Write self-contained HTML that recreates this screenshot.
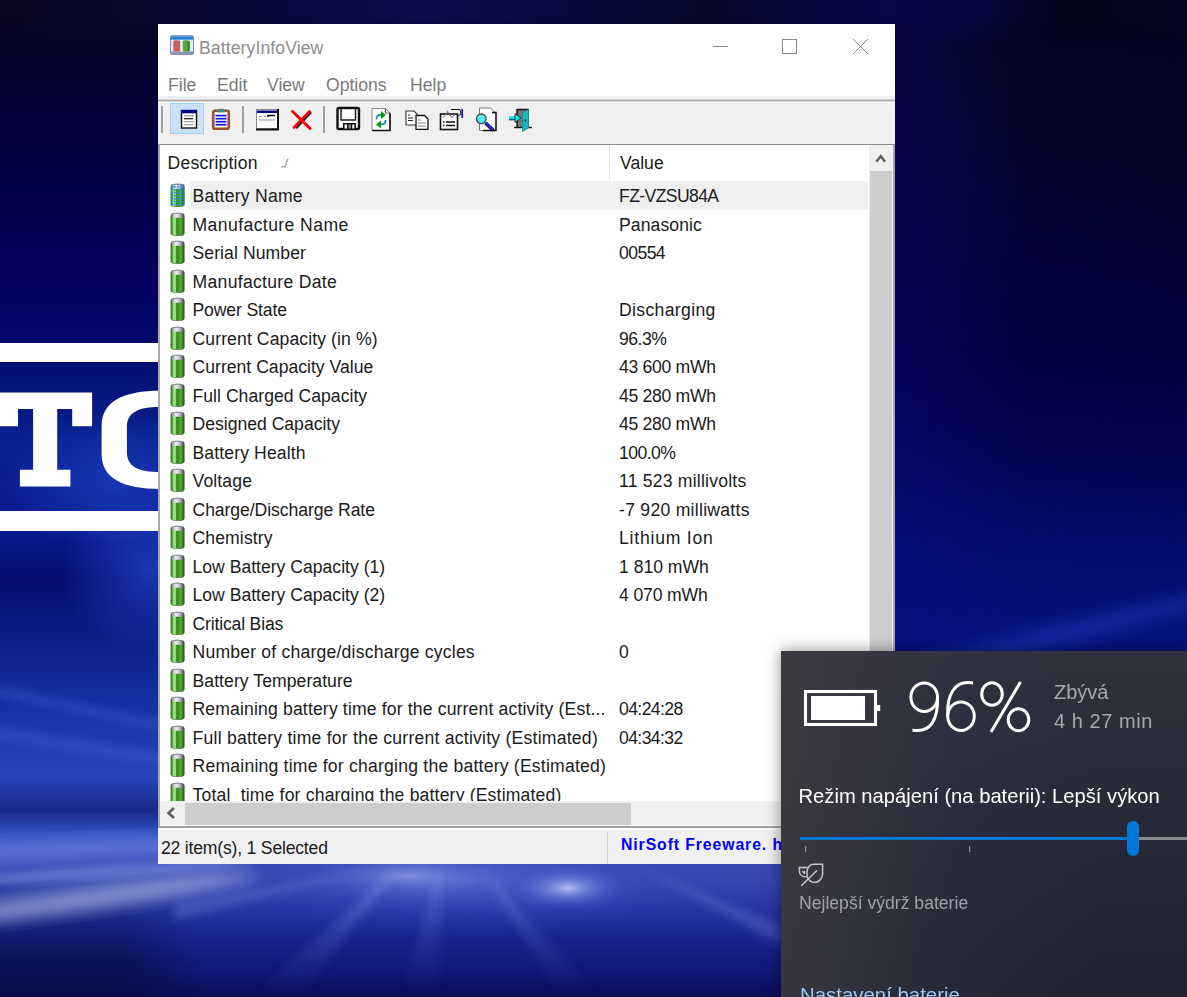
<!DOCTYPE html>
<html><head><meta charset="utf-8">
<style>
*{margin:0;padding:0;box-sizing:border-box}
html,body{width:1187px;height:997px;overflow:hidden}
body{position:relative;font-family:"Liberation Sans",sans-serif;background:#06082a}
.abs{position:absolute}
#bg{position:absolute;left:0;top:0;width:1187px;height:997px}
#win{position:absolute;left:158px;top:24px;width:737px;height:840px;background:#fff;overflow:hidden}
.title{position:absolute;left:41px;top:14px;font-size:17.6px;letter-spacing:0.1px;color:#8e8e8e;white-space:nowrap}
.menu{position:absolute;top:51px;font-size:17.6px;color:#7a7a7a;white-space:nowrap}
#tb{position:absolute;left:0;top:77px;width:737px;height:43px;background:#f0f0f0}
.sep{position:absolute;top:5px;width:2px;height:27px;background:#a0a0a0}
#list{position:absolute;left:0;top:120px;width:737px;height:682px;background:#fff;border-top:1px solid #8c8c8c;border-left:2px solid #a8a8a8;border-right:2px solid #a8a8a8}
.hdr{position:absolute;top:8px;font-size:17.6px;line-height:20px;color:#1b1b1b;white-space:nowrap}
.hsep{position:absolute;top:0;width:1px;height:35px;background:#e5e5e5}
#rows{position:absolute;left:0;top:0;width:709px;height:656px;overflow:hidden}
.row{position:absolute;left:0;width:709px;height:28.5px}
.row.sel::before{content:"";position:absolute;left:29.5px;top:0;width:678px;height:28.5px;background:#efefef}
.row .d{position:absolute;left:32.5px;top:5px;font-size:17.6px;line-height:20px;color:#1b1b1b;white-space:nowrap}
.row .v{position:absolute;left:459px;top:5px;font-size:17.6px;line-height:20px;color:#1b1b1b;white-space:nowrap}
.row svg{position:absolute;left:10px;top:1px}
#vsb{position:absolute;left:709px;top:0;width:24px;height:656px;background:#f0f0f0}
#vthumb{position:absolute;left:1px;top:25.5px;width:22px;height:530px;background:#cdcdcd}
#hsb{position:absolute;left:0;top:656px;width:709px;height:24px;background:#f0f0f0}
#hthumb{position:absolute;left:25px;top:1.5px;width:446px;height:22px;background:#cdcdcd}
#corner{position:absolute;left:709px;top:656px;width:24px;height:24px;background:#f0f0f0}
#status{position:absolute;left:0;top:802px;width:737px;height:38px;background:#f0f0f0;border-top:2px solid #a0a0a0}
.ftxt{white-space:nowrap;line-height:24px}
#fly{position:absolute;left:781px;top:651px;width:406px;height:346px;background:linear-gradient(90deg,rgba(62,62,66,0.75) 0%,rgba(48,48,70,0.35) 45%,rgba(40,40,72,0) 80%),linear-gradient(180deg,#30313e 0%,#282a3a 45%,#1f2230 100%);box-shadow:0 0 14px rgba(0,0,0,.45)}
</style></head><body>
<svg width="0" height="0" style="position:absolute">
  <defs>
    <linearGradient id="bgr" x1="0" y1="0" x2="1" y2="0">
      <stop offset="0" stop-color="#3a6030"/>
      <stop offset="0.1" stop-color="#4aa036"/>
      <stop offset="0.18" stop-color="#8ee070"/>
      <stop offset="0.36" stop-color="#8ee070"/>
      <stop offset="0.42" stop-color="#3e8e26"/>
      <stop offset="0.6" stop-color="#3e8e26"/>
      <stop offset="0.66" stop-color="#56aa3a"/>
      <stop offset="0.8" stop-color="#4e9e32"/>
      <stop offset="0.9" stop-color="#2c6c1c"/>
      <stop offset="1" stop-color="#3a5a30"/>
    </linearGradient>
    <linearGradient id="bcap" x1="0" y1="0" x2="1" y2="0">
      <stop offset="0" stop-color="#9a9aa8"/>
      <stop offset="0.35" stop-color="#f0f0f4"/>
      <stop offset="0.65" stop-color="#c8c4d8"/>
      <stop offset="1" stop-color="#6a6088"/>
    </linearGradient>
    <pattern id="dots" x="0" y="0" width="3" height="3" patternUnits="userSpaceOnUse">
      <rect x="1" y="1" width="1.6" height="1.6" fill="#1a8cff"/>
    </pattern>
    <clipPath id="batclip"><path d="M0.2 4.5 Q0.2 1.8 3 1.8 H12.2 Q15 1.8 15 4.5 V22.5 Q15 25 7.6 25 Q0.2 25 0.2 22.5 Z"/></clipPath>
    <symbol id="bat" viewBox="0 0 16 25">
      <path d="M0.9 5 Q0.9 2.6 3 2.6 H12.2 Q14.3 2.6 14.3 5 V22.5 Q14.3 24.8 7.6 24.8 Q0.9 24.8 0.9 22.5 Z" fill="url(#bgr)"/>
      <path d="M0.9 5 Q0.9 2.6 3 2.6 H12.2 Q14.3 2.6 14.3 5 V22.5 Q14.3 24.8 7.6 24.8 Q0.9 24.8 0.9 22.5 Z" fill="none" stroke="#4a5a44" stroke-width="0.7" opacity="0.8"/>
      <path d="M2.2 6.8 V4.2 Q2.2 2.4 4.2 2.4 H11 Q13 2.4 13 4.2 V6.8 Z" fill="url(#bcap)"/>
      <path d="M3.5 2.6 Q7.6 1.3 11.7 2.6" fill="none" stroke="#8a84a0" stroke-width="0.9"/>
    </symbol>
    <symbol id="batsel" viewBox="0 0 16 25">
      <use href="#bat"/>
      <rect x="0" y="0" width="16" height="25" fill="url(#dots)" clip-path="url(#batclip)"/>
    </symbol>
  </defs>
</svg>
<svg id="bg" width="1187" height="997" viewBox="0 0 1187 997">
  <defs>
    <linearGradient id="gA" x1="0" y1="0" x2="1187" y2="0" gradientUnits="userSpaceOnUse">
      <stop offset="0" stop-color="#08051f"/>
      <stop offset="0.2" stop-color="#080838"/>
      <stop offset="0.36" stop-color="#0a0c4c"/>
      <stop offset="0.6" stop-color="#06062c"/>
      <stop offset="0.75" stop-color="#08084a"/>
      <stop offset="0.82" stop-color="#070640"/>
      <stop offset="0.9" stop-color="#030318"/>
      <stop offset="1" stop-color="#060624"/>
    </linearGradient>
    <linearGradient id="gB" x1="0" y1="0" x2="0" y2="997" gradientUnits="userSpaceOnUse">
      <stop offset="0" stop-color="#08051f"/>
      <stop offset="0.024" stop-color="#070528"/>
      <stop offset="0.11" stop-color="#040035"/>
      <stop offset="0.25" stop-color="#020058"/>
      <stop offset="0.34" stop-color="#04086a"/>
      <stop offset="0.44" stop-color="#08208e"/>
      <stop offset="0.53" stop-color="#0a1c90"/>
      <stop offset="0.58" stop-color="#060c70"/>
      <stop offset="0.7" stop-color="#1430a0"/>
      <stop offset="0.78" stop-color="#2844b8"/>
      <stop offset="0.813" stop-color="#18288a"/>
      <stop offset="0.835" stop-color="#3050c0"/>
      <stop offset="0.87" stop-color="#3a50b8"/>
      <stop offset="0.93" stop-color="#16207c"/>
      <stop offset="0.965" stop-color="#0a1258"/>
      <stop offset="1" stop-color="#080c4a"/>
    </linearGradient>
    <linearGradient id="gC" x1="0" y1="0" x2="0" y2="997" gradientUnits="userSpaceOnUse">
      <stop offset="0.024" stop-color="#05041e"/>
      <stop offset="0.15" stop-color="#050428"/>
      <stop offset="0.25" stop-color="#040232"/>
      <stop offset="0.35" stop-color="#02003c"/>
      <stop offset="0.45" stop-color="#030550"/>
      <stop offset="0.55" stop-color="#040c6a"/>
      <stop offset="0.66" stop-color="#081480"/>
      <stop offset="1" stop-color="#081480"/>
    </linearGradient>
    <linearGradient id="gCx" x1="895" y1="0" x2="1187" y2="0" gradientUnits="userSpaceOnUse">
      <stop offset="0" stop-color="#0a0c90" stop-opacity="0.35"/>
      <stop offset="0.45" stop-color="#0a0c90" stop-opacity="0.05"/>
      <stop offset="1" stop-color="#0a18b0" stop-opacity="0"/>
    </linearGradient>
    <linearGradient id="gD" x1="0" y1="863" x2="0" y2="997" gradientUnits="userSpaceOnUse">
      <stop offset="0" stop-color="#3a48b4"/>
      <stop offset="0.15" stop-color="#3644b0"/>
      <stop offset="0.35" stop-color="#2834a4"/>
      <stop offset="0.55" stop-color="#1a2490"/>
      <stop offset="0.8" stop-color="#111878"/>
      <stop offset="1" stop-color="#0a0e58"/>
    </linearGradient>
    <radialGradient id="glow" cx="0.5" cy="0.5" r="0.5">
      <stop offset="0" stop-color="#d0d8ff" stop-opacity="0.95"/>
      <stop offset="0.4" stop-color="#8898e8" stop-opacity="0.55"/>
      <stop offset="1" stop-color="#4050d0" stop-opacity="0"/>
    </radialGradient>
    <radialGradient id="glowb" cx="0.5" cy="0.5" r="0.5">
      <stop offset="0" stop-color="#6878e0" stop-opacity="0.8"/>
      <stop offset="1" stop-color="#3848c8" stop-opacity="0"/>
    </radialGradient>
    <radialGradient id="darkc" cx="0.5" cy="0.5" r="0.5"><stop offset="0" stop-color="#060a50"/><stop offset="1" stop-color="#060a50" stop-opacity="0"/></radialGradient>
    <radialGradient id="glowc" cx="0.5" cy="0.5" r="0.5">
      <stop offset="0" stop-color="#2a58e0" stop-opacity="0.8"/>
      <stop offset="1" stop-color="#2a58e0" stop-opacity="0"/>
    </radialGradient>
    <linearGradient id="rayf" x1="0" y1="866" x2="0" y2="997" gradientUnits="userSpaceOnUse">
      <stop offset="0" stop-color="#a0b0f8" stop-opacity="0.9"/>
      <stop offset="1" stop-color="#6070d8" stop-opacity="0"/>
    </linearGradient>
    <linearGradient id="mgC" x1="882" y1="0" x2="896" y2="0" gradientUnits="userSpaceOnUse"><stop offset="0" stop-color="#fff" stop-opacity="0"/><stop offset="1" stop-color="#fff"/></linearGradient>
    <linearGradient id="mgCx" x1="0" y1="0" x2="0" y2="200" gradientUnits="userSpaceOnUse"><stop offset="0" stop-color="#fff" stop-opacity="0.8"/><stop offset="1" stop-color="#fff"/></linearGradient>
    <mask id="mCx" maskUnits="userSpaceOnUse" x="0" y="0" width="1187" height="997"><rect x="895" y="0" width="292" height="997" fill="url(#mgCx)"/></mask>
    <mask id="mC" maskUnits="userSpaceOnUse" x="0" y="0" width="1187" height="997"><rect x="870" y="0" width="317" height="997" fill="url(#mgC)"/></mask>
    <linearGradient id="mgD" x1="120" y1="0" x2="200" y2="0" gradientUnits="userSpaceOnUse"><stop offset="0" stop-color="#fff" stop-opacity="0"/><stop offset="1" stop-color="#fff"/></linearGradient>
    <mask id="mD" maskUnits="userSpaceOnUse" x="0" y="0" width="1187" height="997"><rect x="120" y="860" width="680" height="137" fill="url(#mgD)"/></mask>
    <linearGradient id="mgA" x1="0" y1="18" x2="0" y2="50" gradientUnits="userSpaceOnUse"><stop offset="0" stop-color="#fff"/><stop offset="1" stop-color="#fff" stop-opacity="0"/></linearGradient>
    <mask id="mA" maskUnits="userSpaceOnUse" x="0" y="0" width="1187" height="997"><rect x="0" y="0" width="1187" height="50" fill="url(#mgA)"/></mask>
    <filter id="b2" x="-50%" y="-50%" width="200%" height="200%"><feGaussianBlur stdDeviation="2"/></filter>
    <filter id="b4" x="-50%" y="-50%" width="200%" height="200%"><feGaussianBlur stdDeviation="4"/></filter>
    <filter id="b12" x="-10%" y="-10%" width="120%" height="120%"><feGaussianBlur stdDeviation="12"/></filter>
    <filter id="b8" x="-50%" y="-50%" width="200%" height="200%"><feGaussianBlur stdDeviation="8"/></filter>
  </defs>
  <rect x="0" y="0" width="1187" height="997" fill="url(#gB)"/>
  <rect x="870" y="0" width="317" height="997" fill="url(#gC)" mask="url(#mC)"/>
  <rect x="895" y="0" width="292" height="997" fill="url(#gCx)" mask="url(#mCx)"/>
  <rect x="120" y="860" width="680" height="137" fill="url(#gD)" mask="url(#mD)"/>
  <rect x="0" y="0" width="1187" height="50" fill="url(#gA)" mask="url(#mA)"/>
  <!-- left column glows -->
  <ellipse cx="150" cy="570" rx="90" ry="80" fill="url(#glowc)" opacity="0.7"/>
  
  <ellipse cx="40" cy="700" rx="200" ry="5" transform="rotate(12 40 700)" fill="#6078e8" opacity="0.25" filter="url(#b4)"/>
  <ellipse cx="40" cy="740" rx="220" ry="6" transform="rotate(9 40 740)" fill="#6078e8" opacity="0.25" filter="url(#b4)"/>
  <ellipse cx="60" cy="849" rx="220" ry="9" transform="rotate(-2 60 849)" fill="#8090f0" opacity="0.6" filter="url(#b8)"/>
  <ellipse cx="90" cy="873" rx="160" ry="5" transform="rotate(-4 90 873)" fill="#98a4ec" opacity="0.55" filter="url(#b4)"/>
  <ellipse cx="80" cy="900" rx="180" ry="11" transform="rotate(-8 80 900)" fill="#b8c0ec" opacity="0.65" filter="url(#b8)"/>
  <!-- bottom glows -->
  <ellipse cx="470" cy="880" rx="260" ry="55" fill="url(#glowb)" opacity="0.65"/>
  <ellipse cx="568" cy="888" rx="62" ry="24" fill="url(#glow)" opacity="0.85"/>
  <ellipse cx="410" cy="876" rx="120" ry="30" fill="url(#glow)" opacity="0.45"/>
  <g filter="url(#b4)">
    <path d="M400 866 L250 997 L300 997 Z" fill="url(#rayf)" opacity="0.45"/>
    <path d="M480 866 L560 997 L600 997 Z" fill="url(#rayf)" opacity="0.35"/>
    <path d="M440 866 L400 997 L440 997 Z" fill="url(#rayf)" opacity="0.3"/>
    <path d="M640 868 L781 925 L781 945 Z" fill="#8090e0" opacity="0.3"/>
    <path d="M175 905 L380 868 L175 920 Z" fill="#8898e0" opacity="0.3"/>
  </g>
  <!-- right side ray near flyout -->
  <ellipse cx="1040" cy="640" rx="220" ry="10" transform="rotate(-14 1040 640)" fill="#2a40c8" opacity="0.45" filter="url(#b8)"/>
</svg>

<svg class="abs" style="left:0;top:330px" width="160" height="210" viewBox="0 330 160 210">
  <ellipse cx="115" cy="480" rx="110" ry="70" fill="url(#glowc)" opacity="0.55"/>
  <rect x="0" y="343" width="160" height="19" fill="#fff"/>
  <rect x="0" y="511" width="160" height="20" fill="#fff"/>
  <path d="M0 392.6 H92.1 V426.3 H72.2 V408.9 H57.2 V469.7 H70.4 V486.5 H19.9 V469.7 H33.1 V408.9 H18 V426.3 H0 Z" fill="#fff"/>
  <path d="M160 390.8 C124 390.8 101.6 401 101.6 426 V454 C101.6 479 124 488.9 160 488.9 V472 C139 472 126.9 467 126.9 452 V427 C126.9 412 139 407 160 407 Z" fill="#fff"/>
</svg>
<div id="win">
  <svg class="abs" style="left:0;top:0" width="737" height="77" viewBox="158 24 737 77">
    <rect x="170.5" y="35.8" width="23" height="18.7" rx="1.5" fill="#e8eef8" stroke="#7888a8" stroke-width="1"/>
    <rect x="171" y="36.3" width="22" height="3.4" fill="#2a82da"/>
    <rect x="171" y="51.5" width="22" height="2.8" fill="#8898b8"/>
    <path d="M173.2 41.5 Q173.2 40.3 176.7 40.3 Q180.2 40.3 180.2 41.5 V50.5 Q180.2 51.7 176.7 51.7 Q173.2 51.7 173.2 50.5 Z" fill="#c26464"/>
    <path d="M174.5 48.5 H179 V51 H174.5Z" fill="#e85050"/>
    <path d="M182.7 41.5 Q182.7 40.3 186.2 40.3 Q189.7 40.3 189.7 41.5 V50.5 Q189.7 51.7 186.2 51.7 Q182.7 51.7 182.7 50.5 Z" fill="#58a840"/>
    <path d="M187.5 41 V51 H189.7 V41Z" fill="#338a20"/>
    <path d="M713 46.5 H728" stroke="#8a8a8a" stroke-width="1"/>
    <rect x="782.5" y="39.5" width="14" height="14" fill="none" stroke="#8a8a8a" stroke-width="1"/>
    <path d="M853 39 L868 54 M868 39 L853 54" stroke="#8a8a8a" stroke-width="1"/>
    <rect x="158" y="96.1" width="737" height="3.5" fill="#f0f0f0"/><rect x="158" y="99.6" width="737" height="1.4" fill="#a8a8a8"/>
  </svg>
  <div class="title">BatteryInfoView</div>
  <div class="menu" style="left:10px">File</div>
  <div class="menu" style="left:59px">Edit</div>
  <div class="menu" style="left:109px">View</div>
  <div class="menu" style="left:168px">Options</div>
  <div class="menu" style="left:252px">Help</div>
  <div id="tb">
    <svg class="abs" style="left:0;top:0" width="737" height="43" viewBox="158 101 737 43">
      <rect x="158" y="101" width="737" height="0.6" fill="#a8a8a8"/><rect x="158" y="101.6" width="737" height="1.3" fill="#fbfbfb"/>
      <g fill="#a0a0a0"><rect x="161" y="106" width="2" height="27"/><rect x="242" y="106" width="2" height="27"/><rect x="323" y="106" width="2" height="27"/></g>
      <rect x="170.5" y="103.5" width="33" height="30" fill="#c9e0f5" stroke="#9ccff7" stroke-width="1"/>
      <!-- doc icon -->
      <rect x="181.5" y="110.5" width="15" height="17.5" fill="#fff" stroke="#111" stroke-width="1.4"/>
      <rect x="181" y="110" width="16" height="3.3" fill="#000080"/>
      <g stroke-width="1.2"><path d="M184 115.8 H194" stroke="#999"/><path d="M184 118.7 H193" stroke="#111"/><path d="M184 121.7 H194" stroke="#999"/><path d="M184 124.6 H193" stroke="#999"/></g>
      <!-- clipboard -->
      <rect x="213.2" y="110.8" width="15.6" height="18" rx="1.8" fill="#fff" stroke="#8a6a30" stroke-width="2.6"/>
      <rect x="213.2" y="110.8" width="15.6" height="18" rx="1.8" fill="none" stroke="#c02020" stroke-width="2.6" stroke-dasharray="1.3 1.3" opacity="0.6"/>
      <g stroke="#1010ff" stroke-width="1.7"><path d="M215.5 115.6 H226.5"/><path d="M215.5 118.7 H226.5"/><path d="M215.5 121.7 H226.5"/><path d="M215.5 124.7 H226.5"/></g>
      <path d="M217 112 L218.5 109.3 H223.5 L225 112 Z" fill="#20a0a0" stroke="#666" stroke-width="0.8"/>
      <!-- window icon -->
      <rect x="256.5" y="109.5" width="21" height="19" fill="#fff" stroke="#888" stroke-width="1"/>
      <path d="M278 109 V129.5 H256" fill="none" stroke="#111" stroke-width="2"/>
      <rect x="257" y="110.5" width="20" height="2.5" fill="#000080"/>
      <path d="M259 116.5 H262 M263.5 116.5 H266" stroke="#999" stroke-width="1"/>
      <path d="M268 117 V115.5 H275" stroke="#111" stroke-width="1.6" fill="none"/>
      <path d="M259 120 H275" stroke="#999" stroke-width="1"/>
      <!-- red X -->
      <path d="M293.5 112 L311 129" stroke="#111" stroke-width="1.6"/>
      <path d="M310 111.5 L295 127.5" stroke="#111" stroke-width="2.4" transform="translate(1,0.7)"/>
      <path d="M292.5 111.5 L310 128.5 M309.5 111.5 L294 127.5" stroke="#ff0000" stroke-width="2.8" stroke-linecap="round"/>
      <!-- floppy -->
      <rect x="337.5" y="108" width="21.5" height="21" rx="1.5" fill="#fff" stroke="#111" stroke-width="2.4"/>
      <rect x="341" y="108.5" width="14.5" height="11.5" fill="#fff" stroke="#111" stroke-width="1.4"/>
      <rect x="343" y="123" width="13" height="6" fill="#111"/>
      <rect x="344.5" y="124.5" width="2.5" height="4" fill="#fff"/><rect x="348.5" y="124.5" width="2.5" height="4" fill="#888"/><rect x="352.3" y="124.5" width="2" height="4" fill="#fff"/>
      <!-- refresh doc -->
      <path d="M372 108.5 H385.5 L390 113 V130.5 H372 Z" fill="#fff" stroke="#888" stroke-width="1"/>
      <path d="M390 113 V130.5 H372" fill="none" stroke="#111" stroke-width="1.6"/>
      <path d="M385.5 108.5 V113 H390" fill="none" stroke="#555" stroke-width="1"/>
      <path d="M376.5 119.5 Q376 115 380.5 115 H382" fill="none" stroke="#1890a8" stroke-width="1.8"/>
      <path d="M381 111 L386 115 L381 119 Z" fill="#00a000"/>
      <path d="M385.5 120 Q386 124.5 381.5 124.5 H380" fill="none" stroke="#1890a8" stroke-width="1.8"/>
      <path d="M381 120.5 L376 124.5 L381 128.5 Z" fill="#00a000"/>
      <!-- copy -->
      <path d="M406 111 H414 L417 114 V125 H406 Z" fill="#fff" stroke="#333" stroke-width="1.1"/>
      <path d="M408 115 H410 M408 118 H413 M408 120.5 H413" stroke="#222" stroke-width="1"/>
      <path d="M416 115.5 H424.5 L428 119 V129.3 H416 Z" fill="#fff" stroke="#111" stroke-width="1.3"/>
      <path d="M418 120 H421 M418 123 H426 M418 126 H426" stroke="#888" stroke-width="1"/>
      <!-- props -->
      <rect x="440.5" y="114" width="17" height="15.5" fill="#fff" stroke="#111" stroke-width="1.6"/>
      <path d="M443 122 H444.5 M446 122 H455 M443 125.5 H444.5 M446 125.5 H455" stroke="#111" stroke-width="1.3"/>
      <path d="M443 117.5 L447.5 112 L452 117.5 L455.5 113.5" fill="none" stroke="#666" stroke-width="1.4" stroke-dasharray="1 0.6"/>
      <path d="M451 109.5 H460 L461 114 L457 117" fill="none" stroke="#111" stroke-width="1"/>
      <rect x="461.3" y="109" width="1.8" height="9" fill="#1a1aa0"/>
      <!-- find -->
      <path d="M479.5 108 H490.5 L496 113 V130.5 H479.5 Z" fill="#fff" stroke="#777" stroke-width="1"/>
      <path d="M492 112.5 H496 V130.5 H483" fill="none" stroke="#111" stroke-width="1.4"/>
      <circle cx="481.3" cy="118.8" r="4.8" fill="#50f0f8" stroke="#444" stroke-width="1.3"/>
      <path d="M485.5 123 L493.5 130.5" stroke="#111" stroke-width="3.6"/>
      <path d="M485.5 122.5 L493 129.6" stroke="#2020ff" stroke-width="2.2"/>
      <!-- exit -->
      <path d="M517 127 V109.5 H528 V127" fill="#777" stroke="#111" stroke-width="1.4"/>
      <path d="M514 127.5 H532" stroke="#111" stroke-width="1.4"/>
      <path d="M522.5 112.5 L528.5 109.5 V128 L522.5 131.5 Z" fill="#18b8c0" stroke="#0a8a90" stroke-width="0.8"/>
      <path d="M509 118.5 H518" stroke="#111" stroke-width="3.6"/>
      <path d="M509 118 H517" stroke="#10f0ff" stroke-width="2.6"/>
      <path d="M515 113.5 L521 118 L515 122.5 Z" fill="#10f0ff" stroke="#111" stroke-width="0.8"/>
      <circle cx="525.5" cy="120.5" r="0.9" fill="#111"/>
    </svg>
  </div>
  <div id="list">
    <div class="hdr" style="left:7.5px;letter-spacing:0.2px">Description</div>
    <svg class="abs" style="left:120px;top:12px" width="11" height="12"><path d="M1.2 9.7 H4.9 L7.9 1.8" fill="none" stroke="#a8a8a8" stroke-width="1.6"/></svg>
    <div class="hsep" style="left:449px"></div>
    <div class="hdr" style="left:460px">Value</div>
    <div id="rows">
<div class="row sel" style="top:36.0px"><svg width="16" height="25"><use href="#batsel"/></svg><div class="d" style="letter-spacing:0.23px">Battery Name</div><div class="v" style="letter-spacing:-0.61px">FZ-VZSU84A</div></div>
<div class="row" style="top:64.5px"><svg width="16" height="25"><use href="#bat"/></svg><div class="d" style="letter-spacing:0.41px">Manufacture Name</div><div class="v" style="letter-spacing:0.08px">Panasonic</div></div>
<div class="row" style="top:93.0px"><svg width="16" height="25"><use href="#bat"/></svg><div class="d" style="letter-spacing:0.08px">Serial Number</div><div class="v" style="letter-spacing:-0.57px">00554</div></div>
<div class="row" style="top:121.5px"><svg width="16" height="25"><use href="#bat"/></svg><div class="d" style="letter-spacing:0.3px">Manufacture Date</div></div>
<div class="row" style="top:150.0px"><svg width="16" height="25"><use href="#bat"/></svg><div class="d" style="letter-spacing:-0.14px">Power State</div><div class="v" style="letter-spacing:0.34px">Discharging</div></div>
<div class="row" style="top:178.5px"><svg width="16" height="25"><use href="#bat"/></svg><div class="d" style="letter-spacing:0.1px">Current Capacity (in %)</div><div class="v" style="letter-spacing:-0.5px">96.3%</div></div>
<div class="row" style="top:207.0px"><svg width="16" height="25"><use href="#bat"/></svg><div class="d" style="letter-spacing:0.01px">Current Capacity Value</div><div class="v" style="letter-spacing:-0.3px">43 600 mWh</div></div>
<div class="row" style="top:235.5px"><svg width="16" height="25"><use href="#bat"/></svg><div class="d" style="letter-spacing:0.03px">Full Charged Capacity</div><div class="v" style="letter-spacing:-0.3px">45 280 mWh</div></div>
<div class="row" style="top:264.0px"><svg width="16" height="25"><use href="#bat"/></svg><div class="d" style="letter-spacing:-0.01px">Designed Capacity</div><div class="v" style="letter-spacing:-0.3px">45 280 mWh</div></div>
<div class="row" style="top:292.5px"><svg width="16" height="25"><use href="#bat"/></svg><div class="d" style="letter-spacing:0.12px">Battery Health</div><div class="v" style="letter-spacing:-0.56px">100.0%</div></div>
<div class="row" style="top:321.0px"><svg width="16" height="25"><use href="#bat"/></svg><div class="d" style="letter-spacing:0.12px">Voltage</div><div class="v" style="letter-spacing:0.21px">11 523 millivolts</div></div>
<div class="row" style="top:349.5px"><svg width="16" height="25"><use href="#bat"/></svg><div class="d" style="letter-spacing:-0.07px">Charge/Discharge Rate</div><div class="v" style="letter-spacing:0.27px">-7 920 milliwatts</div></div>
<div class="row" style="top:378.0px"><svg width="16" height="25"><use href="#bat"/></svg><div class="d" style="letter-spacing:0.11px">Chemistry</div><div class="v" style="letter-spacing:0.77px">Lithium Ion</div></div>
<div class="row" style="top:406.5px"><svg width="16" height="25"><use href="#bat"/></svg><div class="d" style="letter-spacing:-0.0px">Low Battery Capacity (1)</div><div class="v" style="letter-spacing:-0.01px">1 810 mWh</div></div>
<div class="row" style="top:435.0px"><svg width="16" height="25"><use href="#bat"/></svg><div class="d" style="letter-spacing:-0.0px">Low Battery Capacity (2)</div><div class="v" style="letter-spacing:-0.14px">4 070 mWh</div></div>
<div class="row" style="top:463.5px"><svg width="16" height="25"><use href="#bat"/></svg><div class="d" style="letter-spacing:-0.17px">Critical Bias</div></div>
<div class="row" style="top:492.0px"><svg width="16" height="25"><use href="#bat"/></svg><div class="d" style="letter-spacing:0.2px">Number of charge/discharge cycles</div><div class="v" style="letter-spacing:0px">0</div></div>
<div class="row" style="top:520.5px"><svg width="16" height="25"><use href="#bat"/></svg><div class="d" style="letter-spacing:0.06px">Battery Temperature</div></div>
<div class="row" style="top:549.0px"><svg width="16" height="25"><use href="#bat"/></svg><div class="d" style="letter-spacing:0.15px">Remaining battery time for the current activity (Est...</div><div class="v" style="letter-spacing:-0.6px">04:24:28</div></div>
<div class="row" style="top:577.5px"><svg width="16" height="25"><use href="#bat"/></svg><div class="d" style="letter-spacing:0.23px">Full battery time for the current activity (Estimated)</div><div class="v" style="letter-spacing:-0.6px">04:34:32</div></div>
<div class="row" style="top:606.0px"><svg width="16" height="25"><use href="#bat"/></svg><div class="d" style="letter-spacing:0.21px">Remaining time for charging the battery (Estimated)</div></div>
<div class="row" style="top:634.5px"><svg width="16" height="25"><use href="#bat"/></svg><div class="d" style="letter-spacing:0.17px">Total &nbsp;time for charging the battery (Estimated)</div></div>
    </div>
    <div id="vsb"><svg class="abs" style="left:0;top:0" width="24" height="30"><path d="M7.3 16.8 L11.7 11.3 L16.1 16.8" fill="none" stroke="#606060" stroke-width="2.5"/></svg><div id="vthumb"></div></div>
    <div id="hsb"><svg class="abs" style="left:0;top:0" width="25" height="24"><path d="M18 7 L12.5 12 L18 17" fill="none" stroke="#606060" stroke-width="2.6" transform="translate(-4,0)"/></svg><div id="hthumb"></div></div>
    <div id="corner"></div>
  </div>
  <div id="status">
    <div class="abs" style="left:0;top:0;width:737px;height:1.5px;background:#fafafa"></div>
    <div class="abs" style="left:449px;top:4px;width:1px;height:32px;background:#d2d2d2"></div>
    <div class="abs" style="left:3px;top:10px;font-size:17.6px;letter-spacing:-0.2px;color:#1b1b1b;white-space:nowrap">22 item(s), 1 Selected</div>
    <div class="abs" style="left:463px;top:7.5px;font-size:15.8px;font-weight:bold;letter-spacing:0.9px;color:#0000ff;white-space:nowrap">NirSoft Freeware. htt</div>
  </div>
</div>

<div id="fly">
  <svg class="abs" style="left:0;top:0" width="406" height="346" viewBox="781 651 406 346">
    <rect x="805.5" y="691.5" width="70" height="33" fill="none" stroke="#fff" stroke-width="3.1"/>
    <rect x="877" y="705" width="3.2" height="6" fill="#fff"/>
    <rect x="811" y="696" width="54" height="24" fill="#fff"/>
    <g fill="none" stroke="#fff" stroke-width="3">
      <ellipse cx="924.2" cy="697.2" rx="13.3" ry="14.3"/>
      <path d="M937.5 696 C938.5 722 929 731 917 730.6 L912.5 730.2"/>
      <ellipse cx="961" cy="716.2" rx="13.3" ry="14.3"/>
      <path d="M947.8 716 C946.5 694 955 682.4 968 682.5 L973 683"/>
      <ellipse cx="992" cy="694" rx="10.3" ry="11.3"/>
      <ellipse cx="1018.5" cy="719.7" rx="10.3" ry="11"/>
      <path d="M1020.5 682 L991 732"/>
    </g>
    <rect x="800" y="837" width="330" height="3" fill="#0078d7"/>
    <rect x="1136" y="837" width="60" height="3" fill="#8a8a92"/>
    <rect x="1127" y="821" width="12" height="35" rx="6" fill="#0078d7"/>
    <rect x="805" y="846" width="1.2" height="6" fill="#8a8a92"/>
    <rect x="969" y="846" width="1.2" height="6" fill="#8a8a92"/>
    <g fill="none" stroke="#c4c4cc" stroke-width="1.5">
      <path d="M822.6 864.3 H813.5 C809.5 864.3 806.9 868 806.9 873 C806.9 878.5 809.8 882.5 814 882.5 C819 882.5 822.6 878.5 822.6 873.5 Z"/>
      <path d="M807.5 867.6 H799.4 V871.5 C799.4 874.8 802.5 877 806.8 877"/>
      <path d="M802.2 870.9 L804.3 873.2 L804.8 871"/>
      <path d="M801.3 885.8 L817.1 870.3"/>
    </g>
  </svg>
  <div class="abs ftxt" style="left:273px;top:29px;font-size:20px;color:#a8a8b2">Zbývá</div>
  <div class="abs ftxt" style="left:273px;top:58px;font-size:20px;letter-spacing:0.55px;color:#a8a8b2">4 h 27 min</div>
  <div class="abs ftxt" style="left:17.5px;top:133px;font-size:20.2px;color:#fff">Režim napájení (na baterii): Lepší výkon</div>
  <div class="abs ftxt" style="left:18px;top:240px;font-size:17.6px;color:#a0a0aa">Nejlepší výdrž baterie</div>
  <div class="abs ftxt" style="left:19px;top:332px;font-size:20.4px;color:#99c8f5">Nastavení baterie</div>
</div>
</body></html>
